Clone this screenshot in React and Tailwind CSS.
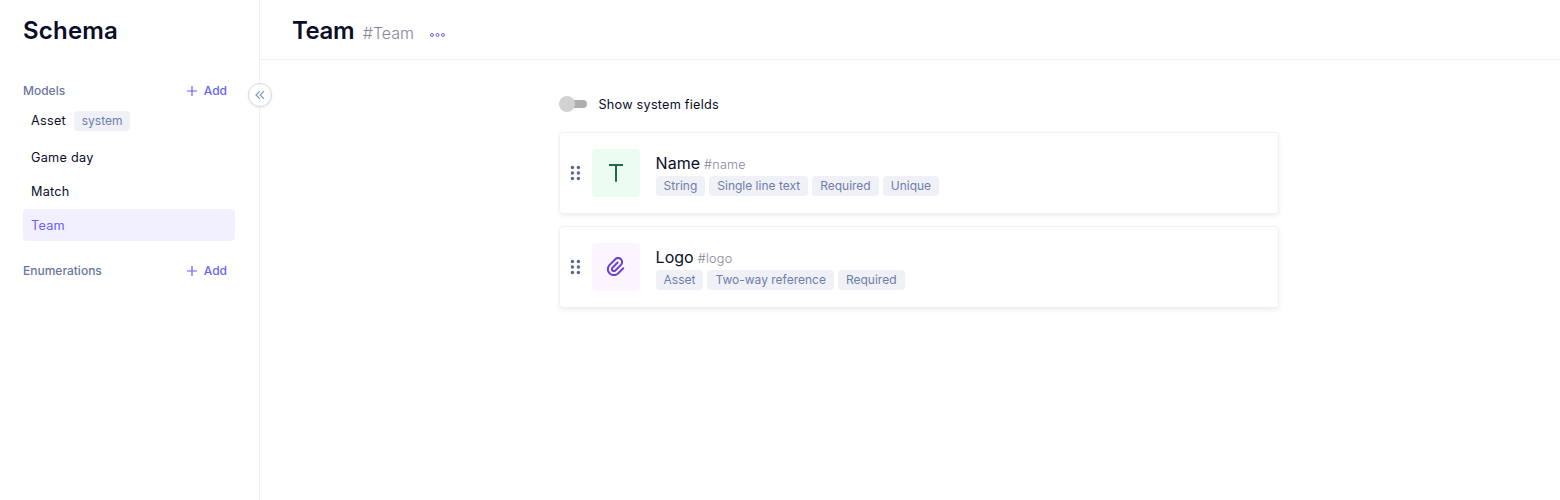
import { RiAttachment2 } from "react-icons/ri";

function AddButton() {
  return (
    <button className="flex h-6 items-center gap-[7px] pr-2 text-[12px] font-medium text-[#6663fd]">
      <svg width="10" height="10" viewBox="0 0 10 10" stroke="currentColor" strokeWidth="1.2">
        <path d="M5 0v10M0 5h10" />
      </svg>
      Add
    </button>
  );
}

function SectionHeader({ title }) {
  return (
    <div className="flex h-6 items-center justify-between">
      <h2 className="text-[12px] font-medium text-[#6a769e]">{title}</h2>
      <AddButton />
    </div>
  );
}

function Tag({ children }) {
  return (
    <span className="flex h-5 items-center rounded-[4px] bg-[#f0f1f7] px-2 text-[12px] tracking-normal whitespace-nowrap text-[#6f7dab]">
      {children}
    </span>
  );
}

function DragHandle() {
  return (
    <svg width="12" height="16" viewBox="0 0 12 16" fill="#5a6596">
      {[2.5, 8, 13.5].map((y) => (
        <g key={y}>
          <circle cx="3.4" cy={y} r="1.7" />
          <circle cx="9.4" cy={y} r="1.7" />
        </g>
      ))}
    </svg>
  );
}

function FieldCard({ name, id, tags, tint, icon }) {
  return (
    <div className="flex h-[82px] items-center rounded-[4px] border border-[#f0f0f7] bg-white pl-[9px] shadow-[0_2px_5px_rgba(0,0,0,0.07)]">
      <DragHandle />
      <div className={`ml-[11px] flex size-12 items-center justify-center rounded-[4px] ${tint}`}>{icon}</div>
      <div className="ml-[15.6px] flex flex-col">
        <div className="flex h-6 items-baseline gap-1">
          <span className="text-[16px] leading-6 text-[#0a0e28]">{name}</span>
          <span className="text-[12.6px] leading-6 font-light tracking-[0.26px] text-[#85859b]">#{id}</span>
        </div>
        <div className="mt-px flex gap-1">
          {tags.map((t) => (
            <Tag key={t}>{t}</Tag>
          ))}
        </div>
      </div>
    </div>
  );
}

export default function App() {
  return (
    <div className="flex h-[500px] w-[1560px] overflow-hidden bg-white font-['Inter',sans-serif] text-[#0a0e28]">
      <aside className="relative flex w-[260px] shrink-0 flex-col border-r border-[#eff0f3] pr-6 pl-[23px]">
        <h1 className="mt-[13px] h-9 text-[24px] leading-9 font-semibold tracking-[0.2px]">Schema</h1>
        <div className="mt-[30px]">
          <SectionHeader title="Models" />
        </div>
        <nav className="mt-2 flex flex-col text-[12.7px] tracking-[0.25px]">
          <div className="flex h-5 items-center gap-[7.8px] pl-2">
            Asset
            <Tag>system</Tag>
          </div>
          <div className="mt-[10px] flex h-8 items-center pt-[2px] pl-2">Game day</div>
          <div className="mt-[2px] flex h-8 items-center pt-[2px] pl-2">Match</div>
          <div className="mt-[2px] flex h-8 items-center rounded-[4px] bg-[#f2f0ff] pt-[2px] pl-2 text-[#6663fd]">Team</div>
        </nav>
        <div className="mt-[18px]">
          <SectionHeader title="Enumerations" />
        </div>
        <button className="absolute top-[83px] -right-[13px] flex size-6 items-center justify-center rounded-full border border-[#d6d9ea] bg-white shadow-[0_1px_3px_rgba(0,0,0,0.08)]">
          <svg width="10" height="10" viewBox="0 0 10 10" fill="none" stroke="#8b95bd" strokeWidth="1.2">
            <path d="M4.8 1.2 1 5l3.8 3.8M9 1.2 5.2 5 9 8.8" />
          </svg>
        </button>
      </aside>
      <main className="flex flex-1 flex-col">
        <header className="flex h-[60px] items-start border-b border-[#eff0f3] pl-8">
          <div className="mt-[13px] flex items-baseline">
            <h1 className="text-[24px] leading-9 font-semibold tracking-[-0.4px]">Team</h1>
            <span className="ml-[8.6px] text-[16px] font-light text-[#85859b]">#Team</span>
          </div>
          <svg className="mt-8 ml-4" width="15" height="6" viewBox="0 0 15 6" fill="none" stroke="#6663fd" strokeWidth="1">
            <circle cx="2" cy="3" r="1.5" />
            <circle cx="7.5" cy="3" r="1.5" />
            <circle cx="13" cy="3" r="1.5" />
          </svg>
        </header>
        <div className="ml-[299px] flex w-[720px] flex-col pt-[34px]">
          <div className="flex h-5 items-center">
            <div className="flex w-7 items-center">
              <span className="z-10 size-4 rounded-full bg-[#d2d2d2]" />
              <span className="-ml-3 h-2 w-6 rounded-full bg-[#afafaf]" />
            </div>
            <span className="ml-[11.5px] pt-[2px] text-[12.7px] tracking-[0.23px]">Show system fields</span>
          </div>
          <div className="mt-[18px] flex flex-col gap-3">
            <FieldCard
              name="Name"
              id="name"
              tags={["String", "Single line text", "Required", "Unique"]}
              tint="bg-[#ebfdf0]"
              icon={
                <svg width="24" height="24" viewBox="0 0 24 24" fill="none" stroke="#1f6a4a" strokeWidth="2">
                  <path d="M5 4h14M12 4v16.7" />
                </svg>
              }
            />
            <FieldCard
              name="Logo"
              id="logo"
              tags={["Asset", "Two-way reference", "Required"]}
              tint="bg-[#faf5ff]"
              icon={<RiAttachment2 size={24} color="#6b3fd0" />}
            />
          </div>
        </div>
      </main>
    </div>
  );
}
